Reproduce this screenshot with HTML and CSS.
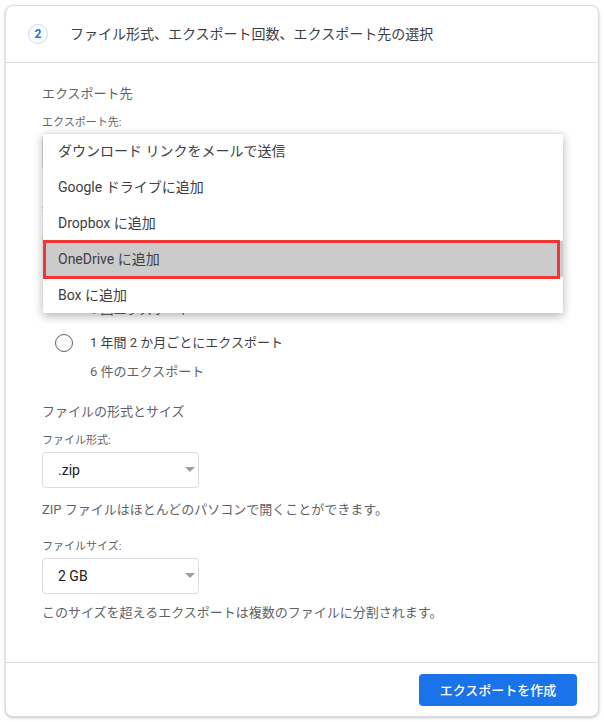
FILE: index.html
```html
<!DOCTYPE html>
<html lang="ja">
<head>
    <meta charset="UTF-8">
    <title>エクスポートの設定</title>
    <link rel="stylesheet" href="styles.css">
</head>
<body>
    <div class="card">
        <div class="card-head">
            <span class="step">2</span>
            <span class="head-title">ファイル形式、エクスポート回数、エクスポート先の選択</span>
        </div>

        <div class="card-body">
            <p class="sec">エクスポート先</p>
            <p class="lbl">エクスポート先:</p>
            <div class="pick-wrap">
                <!-- 選択欄はメニューの下に隠れている -->
                <div class="pick pick-wide"><i class="arrow"></i></div>
                <ul class="menu">
                    <li>ダウンロード リンクをメールで送信</li>
                    <li>Google ドライブに追加</li>
                    <li>Dropbox に追加</li>
                    <li class="on">OneDrive に追加</li>
                    <li>Box に追加</li>
                </ul>
            </div>

            <p class="sec sec-freq">頻度</p>
            <p class="lbl">頻度:</p>
            <div class="opt opt-first">
                <span class="radio"></span>
                <div>
                    <p class="opt-title">1 回のみ</p>
                    <p class="opt-sub">1 回エクスポート</p>
                </div>
            </div>
            <div class="opt">
                <span class="radio"></span>
                <div>
                    <p class="opt-title">1 年間 2 か月ごとにエクスポート</p>
                    <p class="opt-sub">6 件のエクスポート</p>
                </div>
            </div>

            <p class="sec sec-file">ファイルの形式とサイズ</p>
            <p class="lbl">ファイル形式:</p>
            <div class="pick"><span>.zip</span><i class="arrow"></i></div>
            <p class="note">ZIP ファイルはほとんどのパソコンで開くことができます。</p>

            <p class="lbl lbl-size">ファイルサイズ:</p>
            <div class="pick"><span>2 GB</span><i class="arrow"></i></div>
            <p class="note note-size">このサイズを超えるエクスポートは複数のファイルに分割されます。</p>
        </div>

        <div class="card-foot">
            <button class="btn">エクスポートを作成</button>
        </div>
    </div>
</body>
</html>
```

FILE: styles.css
```css
*{margin: 0;padding: 0;box-sizing: border-box;}
body{background: #fff;padding: 5px;font-family: Roboto, "Noto Sans CJK JP", sans-serif;color: #5f6368;}

.card{width: 594px;height: 712px;border: 1px solid #dadce0;border-radius: 8px;box-shadow: 0 1px 3px rgba(60,64,67,.3);display: flex;flex-direction: column;background: #fff;}

.card-head{height: 57px;border-bottom: 1px solid #dadce0;display: flex;align-items: center;padding-left: 22px;}
.step{width: 20px;height: 20px;border: 1px solid #c6dafc;border-radius: 50%;color: #1a73e8;font-size: 12px;font-weight: 700;display: flex;align-items: center;justify-content: center;line-height: 1;}
.head-title{margin-left: 22px;font-size: 14px;color: #3c4043;line-height: 20px;}

.card-body{flex: 1;padding: 21px 36px 0 36px;}
.sec{font-size: 13px;line-height: 20px;color: #5f6368;}
.lbl{font-size: 11px;line-height: 16px;margin-top: 11px;color: #5f6368;}
.sec-freq{margin-top: 30px;}
.sec-file{margin-top: 20px;}
.lbl-size{margin-top: 19px;}

.pick-wrap{position: relative;}
.pick{margin-top: 3px;width: 157px;height: 36px;border: 1px solid #dadce0;border-radius: 4px;display: flex;align-items: center;justify-content: space-between;padding: 0 3px 0 15px;font-size: 14px;color: #202124;}
.pick-wide{width: 520px;justify-content: flex-end;}
.arrow{width: 0;height: 0;border-left: 5px solid transparent;border-right: 5px solid transparent;border-top: 5px solid #9aa0a6;margin-bottom: 2px;}

.menu{position: absolute;top: -1px;left: 1px;width: 520px;background: #fff;list-style: none;box-shadow: 0 3px 9px rgba(0,0,0,.3);border-top: 1px solid #e4e4e4;z-index: 2;}
.menu li{height: 36px;line-height: 36px;padding-left: 15px;font-size: 14px;color: #3c4043;position: relative;}
.menu li:first-child{height: 35px;line-height: 35px;}
.menu li.on{background: #cbcbcb;}
.menu li.on::after{content: "";position: absolute;left: 0;right: 3px;top: -1px;bottom: -2px;border: 3px solid #f33535;}

.opt{display: flex;align-items: flex-start;margin-top: 13px;padding-left: 13px;}
.opt-first{margin-top: 24px;}
.radio{width: 18px;height: 18px;border: 1.5px solid #5f6368;border-radius: 50%;margin-top: 1px;flex-shrink: 0;}
.opt-title{margin-left: 17px;font-size: 13px;line-height: 20px;color: #3c4043;}
.opt-sub{margin-left: 17px;margin-top: 9px;font-size: 13px;line-height: 20px;color: #5f6368;}

.note{font-size: 13px;line-height: 20px;margin-top: 12px;color: #5f6368;}
.note-size{margin-top: 9px;}

.card-foot{height: 54px;border-top: 1px solid #dadce0;display: flex;align-items: center;justify-content: flex-end;padding-right: 21px;}
.btn{width: 158px;height: 32px;background: #1a73e8;color: #fff;border: none;border-radius: 4px;font-family: Roboto, "Noto Sans CJK JP", sans-serif;font-size: 13px;font-weight: 500;}
```
